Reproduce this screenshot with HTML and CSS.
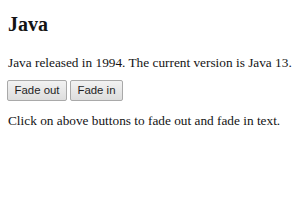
FILE: index.html
```html
<!DOCTYPE html>
<html lang="en">
  <head>
    <meta charset="UTF-8" />
    <title>Java</title>
    <link rel="stylesheet" href="styles.css">
  </head>
  <body>
    <h2 class="title">Java</h2>
    <p class="text">Java released in 1994. The current version is Java 13.</p>
    <div class="actions">
      <button class="btn">Fade out</button>
      <button class="btn">Fade in</button>
    </div>
    <p class="text">Click on above buttons to fade out and fade in text.</p>
  </body>
</html>
```

FILE: styles.css
```css
body {
  margin: 0;
  padding: 12px 8px 0;
  font-family: "Liberation Serif", "Times New Roman", serif;
  font-size: 13.3px;
  color: #141414;
  background: #fff;
}

.title {
  font-size: 20px;
  line-height: 24px;
  margin: 0 0 19px;
}

.text {
  line-height: 15px;
  margin: 0 0 10px;
  white-space: nowrap;
}

.actions {
  display: flex;
  gap: 3px;
  margin-left: -1px;
  margin-bottom: 12px;
}

.btn {
  font-family: "Liberation Sans", Arial, sans-serif;
  font-size: 11.4px;
  line-height: 15px;
  padding: 2px 6.5px;
  color: #1e1e1e;
  background: linear-gradient(#f2f2f2, #dddddd);
  border: 1px solid #a9a9a9;
  border-radius: 2px;
}
```
